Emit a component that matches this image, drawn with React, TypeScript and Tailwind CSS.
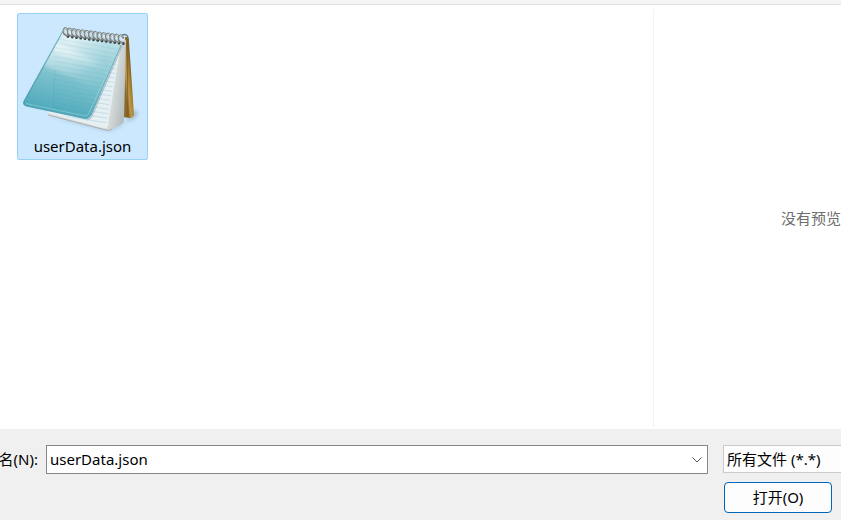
import { useState } from "react";

const ringCount = 14;
const rings = Array.from({ length: ringCount }, (_, i) => ({
  x: 64 + i * 4.25,
  y: 31.5 + i * 0.55,
}));

const paperLines = Array.from({ length: 18 }, (_, i) => i * 4.6);

function NotepadIcon() {
  return (
    <svg viewBox="20 20 124 116" className="h-[116px] w-[124px]" aria-hidden="true">
      <defs>
        <linearGradient id="cover" x1="85" y1="32" x2="62" y2="118" gradientUnits="userSpaceOnUse">
          <stop offset="0" stopColor="#bfe1e7" />
          <stop offset="0.3" stopColor="#9bd0da" />
          <stop offset="0.6" stopColor="#78bfcc" />
          <stop offset="1" stopColor="#4ba8ba" />
        </linearGradient>
        <radialGradient id="glow" cx="68" cy="38" r="40" gradientUnits="userSpaceOnUse">
          <stop offset="0" stopColor="#fff" stopOpacity="0.65" />
          <stop offset="0.5" stopColor="#fff" stopOpacity="0.3" />
          <stop offset="1" stopColor="#fff" stopOpacity="0" />
        </radialGradient>
        <linearGradient id="ray" x1="50" y1="50" x2="104" y2="78" gradientUnits="userSpaceOnUse">
          <stop offset="0" stopColor="#fff" stopOpacity="0.6" />
          <stop offset="1" stopColor="#fff" stopOpacity="0" />
        </linearGradient>
        <linearGradient id="side" x1="111" y1="90" x2="125" y2="92" gradientUnits="userSpaceOnUse">
          <stop offset="0" stopColor="#d9dede" />
          <stop offset="1" stopColor="#b6bebf" />
        </linearGradient>
        <linearGradient id="gold" x1="123" y1="80" x2="131" y2="79" gradientUnits="userSpaceOnUse">
          <stop offset="0" stopColor="#8a6827" />
          <stop offset="0.35" stopColor="#c09a4c" />
          <stop offset="0.7" stopColor="#a97f32" />
          <stop offset="1" stopColor="#80602a" />
        </linearGradient>
        <clipPath id="paperClip">
          <path d="M119 46L105 126L48 112L88 100Z" />
        </clipPath>
        <clipPath id="coverClip">
          <path d="M62 30L121 42L90 115Q88 119 84 118L25 105Q22 104 23 101Z" />
        </clipPath>
        <filter id="soft" x="-30%" y="-60%" width="160%" height="220%">
          <feGaussianBlur stdDeviation="2" />
        </filter>
        <filter id="rayBlur">
          <feGaussianBlur stdDeviation="1.5" />
        </filter>
      </defs>

      {/* shadows on the ground */}
      <path d="M124 122L133 110L137 113L132 119Z" fill="#54707f" opacity="0.45" filter="url(#soft)" />
      <path d="M48 116L108 131L124 124Z" fill="#54707f" opacity="0.3" filter="url(#soft)" />

      {/* back board */}
      <path d="M124 37L127 37Q128 38 128 42L133 115Q132 118 129 118L121 117Z" fill="url(#gold)" />
      <path d="M126 42L127 117" stroke="#6d5120" strokeWidth="0.7" />

      {/* sheets */}
      <path d="M119 42L125 40L123 121Q123 123 121 124L110 130Q108 131 105 130L47 115V111Z" fill="url(#side)" />
      <path d="M120 44L107 125Q106 129 102 128L47 113V111L88 100Z" fill="#e6f0f3" />
      <g clipPath="url(#paperClip)" stroke="#b3d6e2" strokeWidth="0.7">
        {paperLines.map((y) => (
          <path key={y} d={`M60 ${42 + y}L124 ${52 + y}`} />
        ))}
      </g>
      <path d="M47 115L105 130Q109 131 111 129" fill="none" stroke="#a2a29e" strokeWidth="0.8" />
      <path d="M121 46L92 114Q90 119 86 120" fill="none" stroke="#8ca5ad" strokeWidth="1.2" opacity="0.6" />

      {/* cover */}
      <path d="M62 29L121 41L90 115Q88 119 84 118.500L25 106Q21 105 22.500 101Z" fill="url(#cover)" />
      <g clipPath="url(#coverClip)">
        <rect x="20" y="20" width="110" height="100" fill="url(#glow)" />
        <g filter="url(#rayBlur)">
          <path d="M52 50L112 80L104 92L40 64Z" fill="url(#ray)" opacity="0.45" />
          <path d="M56 42L104 64L100 71L51 51Z" fill="url(#ray)" opacity="0.9" />
        </g>
        <g stroke="#3c95a8" strokeWidth="0.5" opacity="0.18">
          {paperLines.map((y) => (
            <path key={y} d={`M52 ${38 + y}L120 ${50 + y}`} />
          ))}
        </g>
        <path d="M54 70L52 111" stroke="#3c95a8" strokeWidth="0.5" opacity="0.25" />
      </g>
      <path d="M62 31L23 102Q22 105 25 106L84 118.500Q88 119 90 115L120 45" fill="none" stroke="#4a96a8" strokeWidth="0.8" />
      <path d="M25 103.500L84 116Q87 116 88 113L118 47" fill="none" stroke="#9fdbe3" strokeWidth="0.7" opacity="0.7" />

      {/* spiral binding */}
      {rings.map(({ x, y }) => (
        <g key={x} fill="none" strokeLinecap="round">
          <ellipse cx={x + 3} cy={y + 4.800} rx="1.400" ry="1.600" fill="#2d3d42" />
          <path d={`M${x + 2.500} ${y + 4}Q${x - 2} ${y + 3} ${x - 1.500} ${y - 1}Q${x} ${y - 6} ${x + 3} ${y - 1}`} stroke="#7c8486" strokeWidth="2" />
          <path d={`M${x + 1.800} ${y + 3}Q${x - 1.200} ${y + 2} ${x - 1} ${y - 1}Q${x} ${y - 4.500} ${x + 2} ${y - 2.500}`} stroke="#d3d9da" strokeWidth="1" />
        </g>
      ))}
      <path d="M121 35Q127 33 127 39" fill="none" stroke="#70787a" strokeWidth="1.500" />
    </svg>
  );
}

function FileTile({ name }: { name: string }) {
  return (
    <button
      type="button"
      className="flex w-[131px] flex-col items-center rounded-xs border border-[#99d1f5] bg-[#cce8ff] pt-1.5 pb-0.5"
    >
      <NotepadIcon />
      <span className="text-[15px] leading-[21px]">{name}</span>
    </button>
  );
}

export default function App() {
  const [fileName, setFileName] = useState("userData.json");

  return (
    <div className="flex min-h-screen flex-col overflow-hidden bg-white font-['Noto_Sans','Noto_Sans_CJK_SC',sans-serif] text-[15px] text-black">
      <div className="h-[5px] border-b border-[#e2e2e2] bg-[#f5f5f5]" />

      <main className="flex flex-1">
        <section className="flex-1 px-[17px] pt-2">
          <FileTile name="userData.json" />
        </section>
        <aside className="mt-1 mb-0.5 flex w-[188px] items-center justify-end border-l border-[#f3f3f3]">
          <p className="leading-6 whitespace-nowrap text-[#6d6d6d]">没有预览</p>
        </aside>
      </main>

      <footer className="grid grid-cols-[38px_1fr_118px] gap-y-2 bg-[#f0f0f0] pt-4 pb-[7px]">
        <label htmlFor="file-name" className="flex items-center justify-end whitespace-nowrap">
          名(N):
        </label>
        <div className="mr-[15px] ml-2 flex h-[29px] border border-[#868686] bg-white">
          <input
            id="file-name"
            value={fileName}
            onChange={(e) => setFileName(e.target.value)}
            className="min-w-0 flex-1 px-[3px] outline-none"
          />
          <button type="button" aria-label="文件名" className="flex w-5 items-center justify-center">
            <svg viewBox="0 0 10 6" className="h-1.5 w-2.5" fill="none" stroke="#555" strokeWidth="1">
              <path d="M0.500 0.500L5 5L9.500 0.500" />
            </svg>
          </button>
        </div>
        <select
          aria-label="所有文件"
          className="h-7 w-full appearance-none border border-r-0 border-[#cbcbcb] bg-[#fdfdfd] px-[3px] outline-none"
        >
          <option>所有文件 (*.*)</option>
        </select>
        <button
          type="button"
          className="col-start-3 ml-px h-[31px] w-[108px] rounded border border-[#0067b8] bg-[#fdfdfd]"
        >
          打开(O)
        </button>
      </footer>
    </div>
  );
}
